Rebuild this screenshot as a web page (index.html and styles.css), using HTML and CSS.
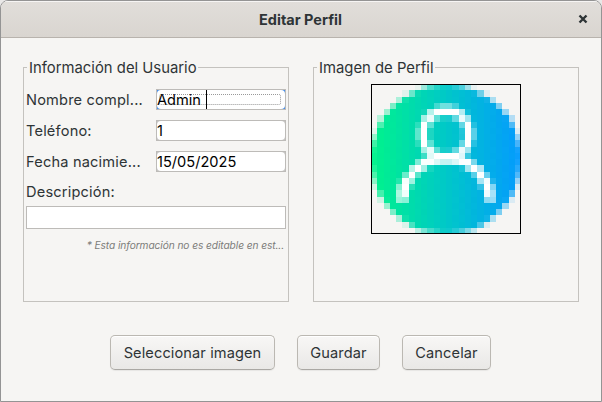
FILE: index.html
```html
<!DOCTYPE html>
<html lang="es">
<head>
<meta charset="utf-8">
<title>Editar Perfil</title>
<link rel="stylesheet" href="styles.css">
</head>
<body>
<div class="window">
  <header class="titlebar">
    <span class="title">Editar Perfil</span>
    <svg class="close" viewBox="0 0 10 10" width="10" height="10"><path d="M1.5 1.5 8.5 8.5M8.5 1.5 1.5 8.5"/></svg>
  </header>
  <main class="panels">
    <fieldset class="panel">
      <legend>Información del Usuario</legend>
      <div class="row"><span class="label">Nombre compl...</span><span class="entry focused"><i class="focus"></i><span class="value">Admin</span><i class="caret"></i></span></div>
      <div class="row"><span class="label">Teléfono:</span><span class="entry"><span class="value">1</span></span></div>
      <div class="row"><span class="label">Fecha nacimie...</span><span class="entry"><span class="value">15/05/2025</span></span></div>
      <div class="label desc">Descripción:</div>
      <div class="textarea"></div>
      <div class="note">* Esta información no es editable en est...</div>
    </fieldset>
    <fieldset class="panel">
      <legend>Imagen de Perfil</legend>
      <div class="avatar"><canvas id="avatar" width="24" height="24"></canvas></div>
    </fieldset>
  </main>
  <footer class="actions">
    <button class="b1">Seleccionar imagen</button>
    <button class="b2">Guardar</button>
    <button class="b3">Cancelar</button>
  </footer>
</div>
<script src="avatar.js"></script>
</body>
</html>
```
FILE: styles.css
```css
* { box-sizing: border-box; }
html { background: #e9e8e7; }
body { margin: 0; font: 14.6px/20px Inter, "Liberation Sans", sans-serif; color: #2e3436; }
.window { width: 602px; height: 402px; border: 1px solid #949494; border-radius: 8px 8px 0 0; background: #f6f5f3; display: flex; flex-direction: column; overflow: hidden; }
.titlebar { height: 37px; flex: none; display: flex; align-items: center; padding: 0 13px 0 22px; background: linear-gradient(#e1deda, #d9d5d0); border-bottom: 1px solid #b8b3ad; box-shadow: inset 0 1px #f6f5f4; }
.title { flex: 1; text-align: center; font-weight: 700; font-size: 14.5px; white-space: nowrap; padding-top: 1px; }
.close { fill: none; stroke: #2e3436; stroke-width: 2.4; }
.panels { display: flex; gap: 24px; padding: 20px 22px 0; }
.panel { width: 266px; height: 244px; margin: 0; padding: 13px 2px 0; border: 1px solid #c4c2be; min-width: 0; }
legend { height: 18px; padding: 0 1px 0 2px; margin-left: 1px; white-space: nowrap; font-size: 14.85px; }
.row { display: flex; height: 31px; align-items: flex-start; }
.label { width: 130px; white-space: nowrap; height: 21px; line-height: 22px; letter-spacing: .18px; }
.desc { margin-top: -1px; }
.entry { position: relative; width: 130px; height: 21px; line-height: 20px; border: 1px solid #bdbbb8; background: #c6c5c3; color: #000; white-space: nowrap; }
.entry::before { content: ""; position: absolute; inset: 0; border-radius: 4px; background: #fff; }
.focused { background: #4a90e8; }
.value { position: relative; }
.focus { position: absolute; left: 2px; right: 4px; top: 4px; bottom: 4px; border: 1px dotted #999; border-radius: 2px; }
.caret { position: absolute; left: 49px; top: 0; width: 1px; height: 19px; background: #000; }
.textarea { width: 260px; height: 23px; margin-top: 4px; border: 1px solid #bdbbb8; background: #fff; }
.note { margin-top: 6px; padding-right: 2px; text-align: right; font-size: 10.2px; font-style: italic; letter-spacing: -.09px; color: #7c7c7a; white-space: nowrap; }
.avatar { width: 150px; height: 150px; margin: -5px 0 0 55px; position: relative; }
.avatar::after { content: ""; position: absolute; inset: 0; border: 1px solid #000; }
.avatar canvas { display: block; width: 150px; height: 150px; image-rendering: pixelated; }
.actions { display: flex; gap: 22px; margin: 33px 0 0 109px; }
button { height: 35px; padding: 0; font: inherit; color: inherit; letter-spacing: .1px; border: 1px solid #bbb8b2; border-bottom-color: #aaa8a4; border-radius: 5px; background: linear-gradient(#f8f7f6, #e9e8e6); box-shadow: inset 0 1px #fff, 0 1px 1px #00000010; white-space: nowrap; }
.b1 { width: 165px; }
.b2 { width: 83px; }
.b3 { width: 89px; }
```
FILE: avatar.js
```js
const ctx = document.getElementById("avatar").getContext("2d");

function ellipse(x, y, rx, ry, start) {
  ctx.beginPath();
  ctx.ellipse(x, y, rx, ry, 0, start, Math.PI * 2);
}

const gradient = ctx.createLinearGradient(0, 0, 24, 0);
gradient.addColorStop(0, "#00f48a");
gradient.addColorStop(0.5, "#00c8c8");
gradient.addColorStop(1, "#049aff");
ctx.fillStyle = gradient;
ellipse(12, 12, 12, 12, 0);
ctx.fill();

ctx.strokeStyle = "#fff";
ctx.lineWidth = 1.5;
ellipse(12, 8, 3.7, 3.7, 0);
ctx.stroke();
ellipse(12, 18.7, 7.1, 7, Math.PI);
ctx.stroke();
```
